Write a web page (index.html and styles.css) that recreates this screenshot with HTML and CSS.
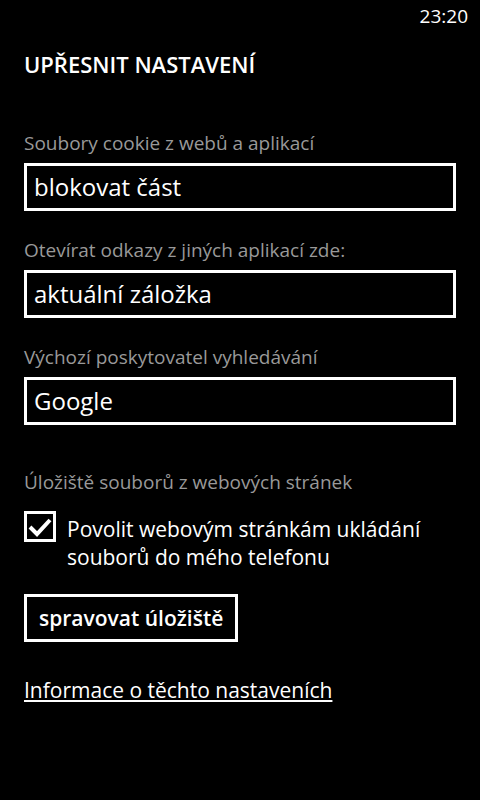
FILE: index.html
```html
<!DOCTYPE html>
<html lang="cs">
  <head>
    <meta charset="UTF-8" />
    <meta name="viewport" content="width=device-width, initial-scale=1.0" />
    <link rel="stylesheet" href="styles.css">
    <title>Upřesnit nastavení</title>
  </head>
  <body>
    <div class="statusbar">
      <span class="clock">23:20</span>
    </div>
    <div class="page">
      <h1 class="title">UPŘESNIT NASTAVENÍ</h1>

      <div class="field">
        <div class="label">Soubory cookie z webů a aplikací</div>
        <div class="picker">blokovat část</div>
      </div>

      <div class="field">
        <div class="label">Otevírat odkazy z jiných aplikací zde:</div>
        <div class="picker">aktuální záložka</div>
      </div>

      <div class="field">
        <div class="label">Výchozí poskytovatel vyhledávání</div>
        <div class="picker">Google</div>
      </div>

      <div class="storage">
        <div class="label">Úložiště souborů z webových stránek</div>
        <label class="check">
          <span class="box">
            <svg width="26" height="26" viewBox="0 0 26 26">
              <path d="M3 13 L10 20 L23 6" fill="none" stroke="#fff" stroke-width="4" />
            </svg>
          </span>
          <span class="check-text">Povolit webovým stránkám ukládání souborů do mého telefonu</span>
        </label>
        <button class="btn">spravovat úložiště</button>
      </div>

      <a class="info" href="#">Informace o těchto nastaveních</a>
    </div>
  </body>
</html>
```

FILE: styles.css
```css
body {
  margin: 0;
  background: #000;
  color: #fff;
  font-family: "Open Sans", "Noto Sans", sans-serif;
  width: 480px;
  height: 800px;
  overflow: hidden;
}

.statusbar {
  height: 32px;
  display: flex;
  justify-content: flex-end;
  align-items: center;
  padding-right: 12px;
}

.clock {
  font-size: 19px;
  line-height: 32px;
}

.page {
  padding: 0 24px;
}

.title {
  margin: 17px 0 0;
  font-size: 22px;
  font-weight: 600;
  line-height: 30px;
}

.field {
  margin-top: 50px;
}

.field + .field {
  margin-top: 25px;
}

.label {
  color: #999;
  font-size: 19px;
  line-height: 28px;
}

.picker {
  margin-top: 6px;
  height: 48px;
  box-sizing: border-box;
  border: 3px solid #fff;
  padding: 0 7px;
  font-size: 24px;
  line-height: 42px;
}

.storage {
  margin-top: 43px;
}

.check {
  display: flex;
  align-items: flex-start;
  gap: 11px;
  margin-top: 15px;
}

.box {
  flex: none;
  width: 32px;
  height: 31px;
  box-sizing: border-box;
  border: 3px solid #fff;
  display: flex;
  align-items: center;
  justify-content: center;
}

.check-text {
  margin-top: 4px;
  font-size: 21px;
  line-height: 28px;
}

.btn {
  display: block;
  margin-top: 23px;
  height: 48px;
  padding: 0 12px;
  background: #000;
  color: #fff;
  border: 3px solid #fff;
  font-family: inherit;
  font-size: 21px;
  font-weight: 600;
}

.info {
  display: inline-block;
  margin-top: 34px;
  color: #fff;
  font-size: 21px;
  line-height: 28px;
}
```
